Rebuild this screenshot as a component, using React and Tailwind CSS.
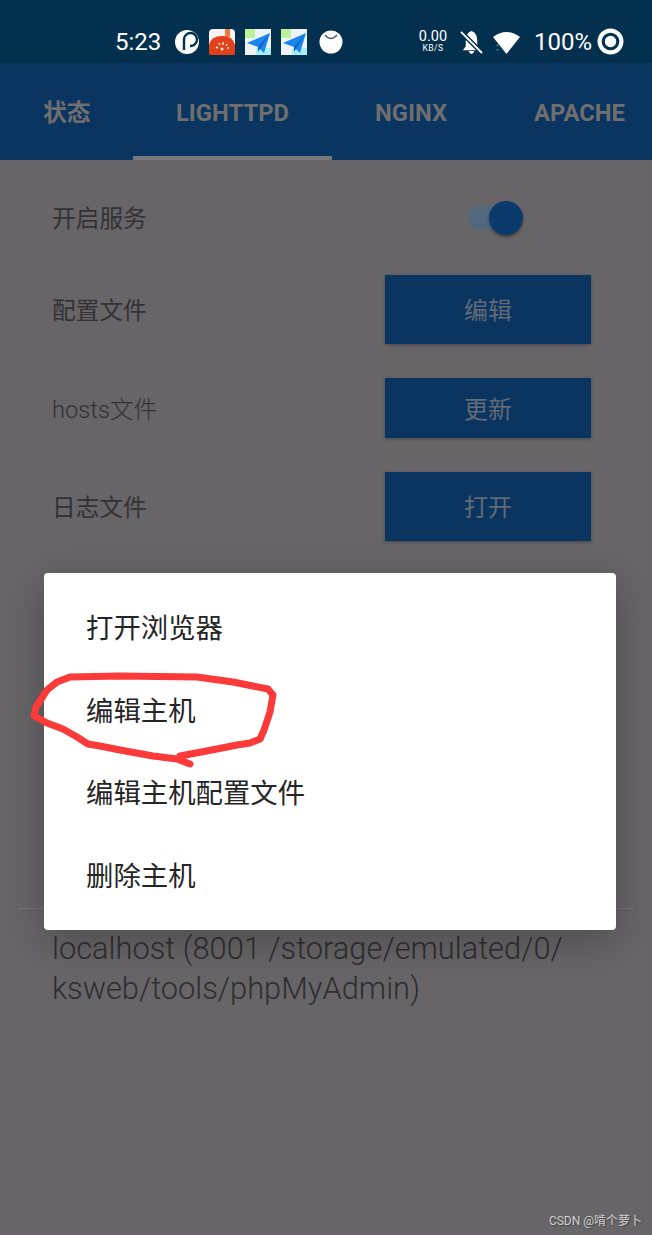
const cjk = '"Roboto", "Noto Sans CJK SC", sans-serif';

function Speedometer() {
  return (
    <svg width="26" height="26" viewBox="0 0 26 26">
      <rect width="26" height="26" rx="4" fill="#f7f3ee" />
      <rect x="16" y="0" width="5" height="8" fill="#ee7a3a" />
      <path d="M0 24V16Q2 7 13 7T26 16V24Q26 26 24 26H2Q0 26 0 24Z" fill="#e2401a" />
      <path d="M7 18l2 1M10 14l1 2M14 13v3M18 15l-1 2M20 19l-2 0" stroke="#fde8d8" strokeWidth="1.4" />
      <circle cx="13" cy="20" r="1.5" fill="#fde8d8" />
    </svg>
  );
}

function PlaneTile() {
  return (
    <svg width="26" height="26" viewBox="0 0 26 26">
      <rect width="26" height="26" fill="#eef3f7" />
      <rect width="10" height="9" fill="#bdf09a" />
      <rect x="11" y="19" width="15" height="7" fill="#a5eefa" />
      <path d="M2 14L25 4L19 24L13 18Z" fill="#1a86ef" />
      <path d="M13 18L25 4L13 23Z" fill="#0d62c4" />
    </svg>
  );
}

function StatusBar() {
  return (
    <div className="h-[63px] pt-[20px] bg-[#03304f] flex items-center text-white shrink-0">
      <span className="ml-[115px] w-[46px] text-[24px] font-normal leading-none whitespace-nowrap">5:23</span>
      <div className="ml-[14px] flex items-center">
        <svg width="24" height="24" viewBox="0 0 24 24">
          <circle cx="12" cy="12" r="12" fill="#fff" />
          <path d="M9 20V9A6.5 6.5 0 1 1 15 16" fill="none" stroke="#03304f" strokeWidth="2.4" />
          <circle cx="15.5" cy="9.5" r="3.4" fill="#fff" />
        </svg>
        <div className="ml-[10px]"><Speedometer /></div>
        <div className="ml-[10px]"><PlaneTile /></div>
        <div className="ml-[10px]"><PlaneTile /></div>
        <svg className="ml-[12px]" width="24" height="24" viewBox="0 0 24 24">
          <circle cx="12" cy="12" r="11.5" fill="#fff" />
          <path d="M6 5Q12 12 18 5" fill="none" stroke="#4a6478" strokeWidth="1.3" />
        </svg>
      </div>
      <div className="ml-[76px] w-[28px] flex flex-col items-center leading-none">
        <span className="text-[14.5px] leading-[14px]">0.00</span>
        <span className="text-[8.5px] leading-[9px] tracking-[0.5px]">KB/S</span>
      </div>
      <svg className="ml-[13px]" width="23" height="24" viewBox="0 0 24 25">
        <path d="M12 1Q18 3 18 11V17L22 21H3L6 17V11Q6 3 12 1ZM9 22H15Q14 25 12 25T9 22Z" fill="#fff" />
        <path d="M1 2L23 24" stroke="#03304f" strokeWidth="5" />
        <path d="M1 2L23 24" stroke="#fff" strokeWidth="2" />
      </svg>
      <svg className="ml-[10px]" width="27" height="24" viewBox="0 0 27 24">
        <path d="M0 7Q13.5 -3 27 7L13.5 24Z" fill="#fff" />
        <path d="M3 16L4.5 14L6 16ZM3 19L4.5 21L6 19Z" fill="#5b7488" />
      </svg>
      <span className="ml-[14px] w-[56px] text-[24px] font-normal leading-none whitespace-nowrap">100%</span>
      <svg className="ml-[7px]" width="27" height="27" viewBox="0 0 26 26">
        <circle cx="13" cy="13" r="10.5" fill="none" stroke="#fff" strokeWidth="4" />
        <circle cx="13" cy="13" r="5.5" fill="#fff" />
      </svg>
    </div>
  );
}

function Tabs() {
  return (
    <div className="h-[97px] bg-[#0b3561] relative shrink-0 font-bold text-[23.8px] text-[#6f6f70] leading-none">
      <div className="h-full flex items-center pt-[4px]">
        <span className="ml-[43px] w-[133px]">状态</span>
        <span className="w-[199px]">LIGHTTPD</span>
        <span className="w-[159px]">NGINX</span>
        <span>APACHE</span>
      </div>
      <div className="absolute left-[133px] bottom-0 w-[199px] h-[4px] bg-[#76787b]" />
    </div>
  );
}

function ActionRow({ label, button, height, mt, light }) {
  return (
    <div className={`flex items-center justify-between pl-[52px] pr-[61px] ${mt}`}>
      <span className={`pt-[5px] text-[23.7px] leading-none text-[#333234] ${light ? 'font-light' : ''}`}>{label}</span>
      <div className={`w-[206px] ${height} pt-[3px] bg-[#0b3561] shadow-[0_1px_3px_rgba(0,0,0,0.3)] flex items-center justify-center text-[24px] text-[#626a76]`}>
        {button}
      </div>
    </div>
  );
}

const menuItems = ['打开浏览器', '编辑主机', '编辑主机配置文件', '删除主机'];

export default function App() {
  return (
    <div className="relative w-[652px] h-[1235px] overflow-hidden bg-[#676567] flex flex-col" style={{ fontFamily: cjk }}>
      <StatusBar />
      <Tabs />

      {/* Service toggle */}
      <div className="flex items-center justify-between pl-[52px] pr-[140px] h-[115px]">
        <span className="pt-[4px] text-[23.7px] leading-none text-[#333234]">开启服务</span>
        <div className="relative w-[44px] h-[24px] rounded-full bg-[#53687f]">
          <div className="absolute -right-[11px] -top-[5px] w-[34px] h-[34px] rounded-full bg-[#0b3a6c] shadow-[0_2px_3px_rgba(0,0,0,0.4)]" />
        </div>
      </div>

      <ActionRow label="配置文件" button="编辑" height="h-[69px]" mt="mt-0" />
      <ActionRow label="hosts文件" button="更新" height="h-[60px]" mt="mt-[34px]" light />
      <ActionRow label="日志文件" button="打开" height="h-[69px]" mt="mt-[34px]" />

      {/* Host list */}
      <div className="mt-[367px] mx-[18px] border-t border-[#767476] pt-[20px] px-[34px] text-[30.8px] leading-[40px] font-light text-[#2f2e30] whitespace-nowrap">
        <div>localhost (8001 /storage/emulated/0/</div>
        <div>ksweb/tools/phpMyAdmin)</div>
      </div>

      {/* Context menu dialog */}
      <div className="absolute left-[44px] top-[573px] w-[572px] h-[357px] bg-white rounded-[4px] shadow-[0_10px_40px_rgba(0,0,0,0.25)] pt-[14px] pl-[42px] text-[27.4px] text-[#252525]">
        {menuItems.map(item => (
          <div key={item} className="h-[82.5px] pt-[3px] flex items-center">{item}</div>
        ))}
      </div>

      {/* Red hand-drawn annotation */}
      <svg className="absolute left-0 top-0 pointer-events-none" width="652" height="1235" viewBox="0 0 652 1235" fill="none">
        <path
          d="M190 764L177 759L153 756L120 750L100 746L88 744L77 737L63 729L47 723L34 716L36 707L47 690L57 682L70 677L120 676L197 677L233 682L268 689L273 695L270 712L264 730L260 739L250 743L237 745L217 749L180 756"
          stroke="#fc3a3a"
          strokeWidth="7"
          strokeLinecap="round"
          strokeLinejoin="round"
        />
      </svg>

      {/* Watermark */}
      <span className="absolute right-[10px] bottom-[8px] text-[12px] leading-none text-[#d0d0d0] [text-shadow:1px_1px_1px_#444]">CSDN @啃个萝卜</span>
    </div>
  );
}
